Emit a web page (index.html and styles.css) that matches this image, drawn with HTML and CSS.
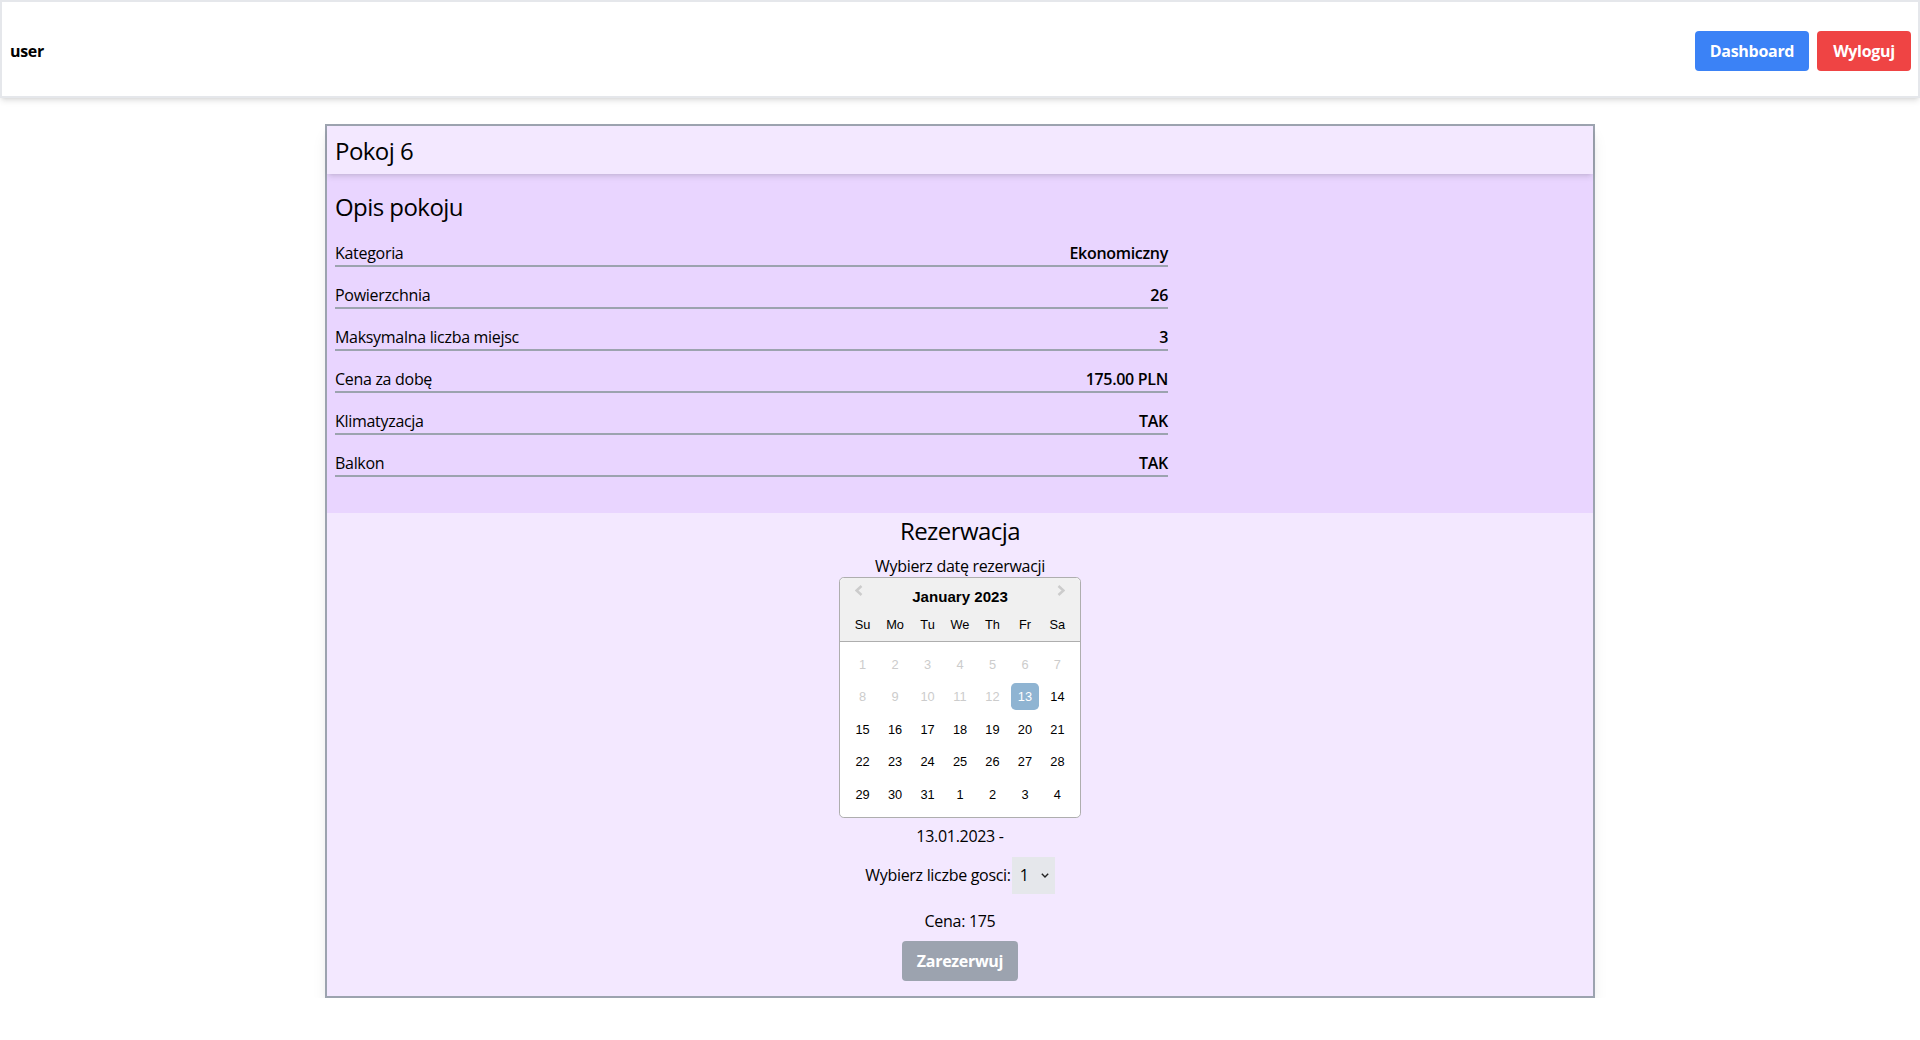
FILE: index.html
```html
<!DOCTYPE html>
<html lang="pl">
<head>
<meta charset="utf-8">
<title>Pokoj 6</title>
<link rel="stylesheet" href="styles.css">
</head>
<body>
<header class="topbar">
  <span class="username">user</span>
  <nav class="actions">
    <button class="btn btn-blue">Dashboard</button>
    <button class="btn btn-red">Wyloguj</button>
  </nav>
</header>
<main class="card">
  <div class="card-title"><h1>Pokoj 6</h1></div>
  <section class="desc">
    <h2>Opis pokoju</h2>
    <div class="rows">
      <div class="row"><span>Kategoria</span><b>Ekonomiczny</b></div>
      <div class="row"><span>Powierzchnia</span><b>26</b></div>
      <div class="row"><span>Maksymalna liczba miejsc</span><b>3</b></div>
      <div class="row"><span>Cena za dobę</span><b>175.00 PLN</b></div>
      <div class="row"><span>Klimatyzacja</span><b>TAK</b></div>
      <div class="row"><span>Balkon</span><b>TAK</b></div>
    </div>
  </section>
  <section class="booking">
    <h2>Rezerwacja</h2>
    <p class="pick">Wybierz datę rezerwacji</p>
    <div class="dp">
      <div class="dp-header">
        <span class="nav prev"><svg width="8" height="11" viewBox="0 0 8 11"><polyline points="6.5,1 1.6,5.5 6.5,10" fill="none" stroke="#ccc" stroke-width="2.4"/></svg></span>
        <span class="nav next"><svg width="8" height="11" viewBox="0 0 8 11"><polyline points="1.5,1 6.4,5.5 1.5,10" fill="none" stroke="#ccc" stroke-width="2.4"/></svg></span>
        <div class="dp-month">January 2023</div>
        <div class="dp-names"><span class="dn">Su</span><span class="dn">Mo</span><span class="dn">Tu</span><span class="dn">We</span><span class="dn">Th</span><span class="dn">Fr</span><span class="dn">Sa</span></div>
      </div>
      <div class="dp-body">
        <div class="wk"><span class="d dis">1</span><span class="d dis">2</span><span class="d dis">3</span><span class="d dis">4</span><span class="d dis">5</span><span class="d dis">6</span><span class="d dis">7</span></div>
        <div class="wk"><span class="d dis">8</span><span class="d dis">9</span><span class="d dis">10</span><span class="d dis">11</span><span class="d dis">12</span><span class="d sel">13</span><span class="d">14</span></div>
        <div class="wk"><span class="d">15</span><span class="d">16</span><span class="d">17</span><span class="d">18</span><span class="d">19</span><span class="d">20</span><span class="d">21</span></div>
        <div class="wk"><span class="d">22</span><span class="d">23</span><span class="d">24</span><span class="d">25</span><span class="d">26</span><span class="d">27</span><span class="d">28</span></div>
        <div class="wk"><span class="d">29</span><span class="d">30</span><span class="d">31</span><span class="d">1</span><span class="d">2</span><span class="d">3</span><span class="d">4</span></div>
      </div>
    </div>
    <p class="range">13.01.2023 -</p>
    <div class="guests">
      <label for="g">Wybierz liczbe gosci:</label>
      <div class="sel-wrap">
        <select id="g" class="sel-box"><option>1</option><option>2</option><option>3</option></select>
        <svg class="chev" width="8" height="5" viewBox="0 0 8 5"><polyline points="0.8,0.8 4,4 7.2,0.8" fill="none" stroke="#222" stroke-width="1.4"/></svg>
      </div>
    </div>
    <p class="price">Cena: 175</p>
    <button class="btn btn-gray">Zarezerwuj</button>
  </section>
</main>
</body>
</html>
```

FILE: styles.css
```css
* { box-sizing: border-box; margin: 0; padding: 0; }

body {
  margin: 0;
  background: #fff;
  color: #000;
  font-family: "Open Sans", "Noto Sans", sans-serif;
  font-size: 16px;
  line-height: 1.5;
  letter-spacing: -0.3px;
}

.topbar {
  height: 98px;
  border: 2px solid #e5e7eb;
  background: #fff;
  display: flex;
  align-items: center;
  justify-content: space-between;
  padding: 3px 7px 0 8px;
  box-shadow: 0 4px 6px -1px rgba(0,0,0,.1), 0 2px 4px -2px rgba(0,0,0,.1);
}

.username { font-weight: 700; font-size: 16px; }

.actions { display: flex; gap: 8px; }

.btn {
  height: 40px;
  border: 0;
  border-radius: 4px;
  color: #fff;
  font-family: "Open Sans", "Noto Sans", sans-serif;
  font-weight: 700;
  font-size: 16px;
  line-height: 24px;
  letter-spacing: -0.3px;
  padding: 0;
  cursor: pointer;
}
.btn-blue { background: #3b82f6; width: 114px; }
.btn-red { background: #ef4444; width: 94px; }
.btn-gray { background: #9ca3af; width: 116px; margin-top: 8px; }

.card {
  width: 1270px;
  margin: 26px auto 0;
  border: 2px solid #9ca3af;
  box-shadow: 0 10px 15px -3px rgba(0,0,0,.1), 0 4px 6px -4px rgba(0,0,0,.1);
}

h1, h2 { font-size: 24px; line-height: 32px; font-weight: 400; letter-spacing: -0.55px; }

.card-title {
  position: relative;
  z-index: 1;
  background: #f3e8ff;
  padding: 9px 8px 7px;
  box-shadow: 0 4px 6px -1px rgba(0,0,0,.1), 0 2px 4px -2px rgba(0,0,0,.1);
}

.desc {
  background: #e9d5ff;
  padding: 17px 8px 36px;
}

.rows { width: 833px; padding-top: 2px; }

.row {
  display: flex;
  justify-content: space-between;
  margin-top: 14px;
  padding-top: 2px;
  border-bottom: 2px solid #9ca3af;
  line-height: 24px;
}
.row b { font-weight: 600; }

.booking {
  background: #f3e8ff;
  display: flex;
  flex-direction: column;
  align-items: center;
  padding: 2px 8px 15px;
}

.pick { margin-top: 7px; }

/* date picker */
.dp {
  border: 1px solid #aeaeae;
  border-radius: 4.8px;
  background: #fff;
  font-family: "Liberation Sans", Arial, sans-serif;
  font-size: 12.8px;
  letter-spacing: 0;
  position: relative;
  margin-top: -1px;
}
.dp-header {
  background: #f0f0f0;
  border-bottom: 1px solid #aeaeae;
  border-radius: 4.8px 4.8px 0 0;
  padding: 8px 0;
  text-align: center;
  position: relative;
}
.dp-month { font-weight: 700; font-size: 15.1px; line-height: 22.65px; }
.dp-names { display: flex; justify-content: center; margin-bottom: -8px; }
.dn, .d {
  width: 27.2px;
  line-height: 27.2px;
  margin: 2.656px;
  text-align: center;
}
.dp-body { margin: 6px 6.4px 6.4px; }
.wk { display: flex; }
.d { border-radius: 4.8px; }
.dis { color: #ccc; }
.sel { background: #8fb4d2; color: #fff; }

.nav { position: absolute; top: 7px; width: 8px; height: 11px; display: block; }
.nav svg { display: block; }
.nav.prev { left: 15px; }
.nav.next { right: 15px; }

.range { margin-top: 6px; }

.guests {
  margin-top: 9px;
  display: flex;
  align-items: center;
  height: 37px;
}
.sel-wrap { position: relative; margin-left: 1px; }
.sel-box {
  display: block;
  width: 43px;
  height: 37px;
  border: 0;
  border-radius: 0;
  background: #e5e7eb;
  font-family: "Open Sans", "Noto Sans", sans-serif;
  font-size: 16px;
  color: #000;
  padding-left: 8px;
  -webkit-appearance: none;
  appearance: none;
}
.chev { position: absolute; right: 6px; top: 16px; pointer-events: none; }

.price { margin-top: 15px; }
```
